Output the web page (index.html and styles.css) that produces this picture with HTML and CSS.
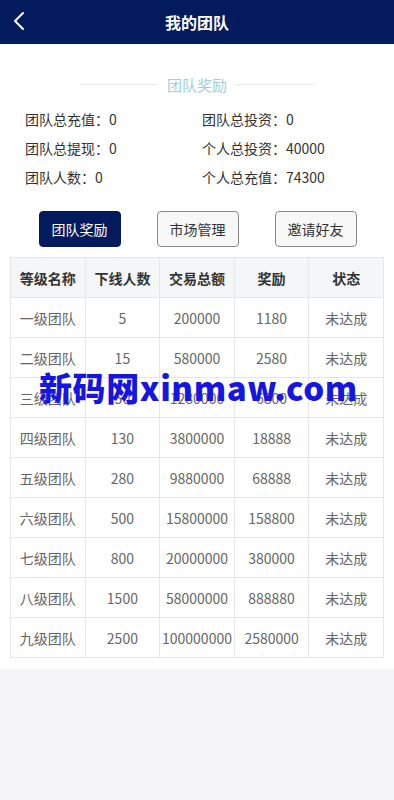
FILE: index.html
```html
<!DOCTYPE html>
<html lang="zh-CN">
<head>
<meta charset="utf-8">
<meta name="viewport" content="width=device-width, initial-scale=1">
<title>我的团队</title>
<link rel="stylesheet" href="styles.css">
</head>
<body>
<div class="page">
  <header class="topbar">
    <span class="back">
      <svg width="14" height="20" viewBox="0 0 14 20"><path d="M11 2 L3 10 L11 18" fill="none" stroke="#fff" stroke-width="2" stroke-linecap="round" stroke-linejoin="round"/></svg>
    </span>
    <h1 class="title">我的团队</h1>
  </header>
  <main class="content">
    <div class="section-title"><span class="line"></span><span class="label">团队奖励</span><span class="line"></span></div>
    <div class="stats">
      <div class="stat">团队总充值：0</div>
      <div class="stat">团队总投资：0</div>
      <div class="stat">团队总提现：0</div>
      <div class="stat">个人总投资：40000</div>
      <div class="stat">团队人数：0</div>
      <div class="stat">个人总充值：74300</div>
    </div>
    <div class="tabs">
      <button class="tab active">团队奖励</button>
      <button class="tab">市场管理</button>
      <button class="tab">邀请好友</button>
    </div>
    <table class="levels">
      <thead>
        <tr><th>等级名称</th><th>下线人数</th><th>交易总额</th><th>奖励</th><th>状态</th></tr>
      </thead>
      <tbody>
        <tr><td>一级团队</td><td>5</td><td>200000</td><td>1180</td><td>未达成</td></tr>
        <tr><td>二级团队</td><td>15</td><td>580000</td><td>2580</td><td>未达成</td></tr>
        <tr><td>三级团队</td><td>50</td><td>1280000</td><td>6800</td><td>未达成</td></tr>
        <tr><td>四级团队</td><td>130</td><td>3800000</td><td>18888</td><td>未达成</td></tr>
        <tr><td>五级团队</td><td>280</td><td>9880000</td><td>68888</td><td>未达成</td></tr>
        <tr><td>六级团队</td><td>500</td><td>15800000</td><td>158800</td><td>未达成</td></tr>
        <tr><td>七级团队</td><td>800</td><td>20000000</td><td>380000</td><td>未达成</td></tr>
        <tr><td>八级团队</td><td>1500</td><td>58000000</td><td>888880</td><td>未达成</td></tr>
        <tr><td>九级团队</td><td>2500</td><td>100000000</td><td>2580000</td><td>未达成</td></tr>
      </tbody>
    </table>
    <div class="watermark">新码网xinmaw.com</div>
  </main>
</div>
</body>
</html>
```
FILE: styles.css
```css
* { box-sizing: border-box; }
html, body { margin: 0; padding: 0; }
body {
  background: #f5f5f9;
  font-family: "Noto Sans CJK SC", "Noto Sans", sans-serif;
  color: #333;
  width: 394px;
}
.topbar {
  height: 44px;
  background: #031a5d;
  display: flex;
  align-items: center;
  justify-content: center;
  position: relative;
}
.back {
  position: absolute;
  left: 12px;
  top: 11px;
  display: flex;
}
.title {
  margin: 0;
  color: #fff;
  font-size: 16px;
  font-weight: 700;
  line-height: 44px;
}
.content {
  background: #fff;
  padding: 20px 10px 11px;
  position: relative;
}
.section-title {
  display: flex;
  align-items: center;
  justify-content: center;
  gap: 9px;
  height: 40px;
}
.section-title .line {
  width: 78px;
  height: 1px;
  background: #e6e8ea;
}
.section-title .label {
  color: #9dcfe2;
  font-size: 15px;
}
.stats {
  display: grid;
  grid-template-columns: 177px 1fr;
  padding-left: 15px;
  row-gap: 7px;
  margin-top: 4px;
}
.stat {
  font-size: 14px;
  line-height: 22px;
  color: #333;
}
.tabs {
  display: flex;
  justify-content: center;
  gap: 36px;
  margin-top: 23px;
  padding-left: 1px;
}
.tab {
  width: 82px;
  height: 36px;
  border: 1px solid #8a8a8a;
  border-radius: 4px;
  background: #f8f8f8;
  font-family: "Noto Sans CJK SC", sans-serif;
  font-size: 14px;
  color: #333;
  padding: 0;
}
.tab.active {
  background: #031a5d;
  border-color: #031a5d;
  color: #fff;
}
.levels {
  width: 374px;
  margin-top: 10px;
  border-collapse: collapse;
  table-layout: fixed;
}
.levels th, .levels td {
  border: 1px solid #e5e6e8;
  height: 40px;
  text-align: center;
  font-size: 14px;
  padding: 0;
  white-space: nowrap;
}
.levels th {
  background: #f5f6f8;
  font-weight: 700;
  color: #333;
}
.levels td {
  color: #666;
}
.watermark {
  position: absolute;
  left: 39px;
  top: 323px;
  font-size: 33px;
  font-weight: 900;
  color: #1616e0;
  line-height: 40px;
  letter-spacing: 0.6px;
  white-space: nowrap;
}
```
